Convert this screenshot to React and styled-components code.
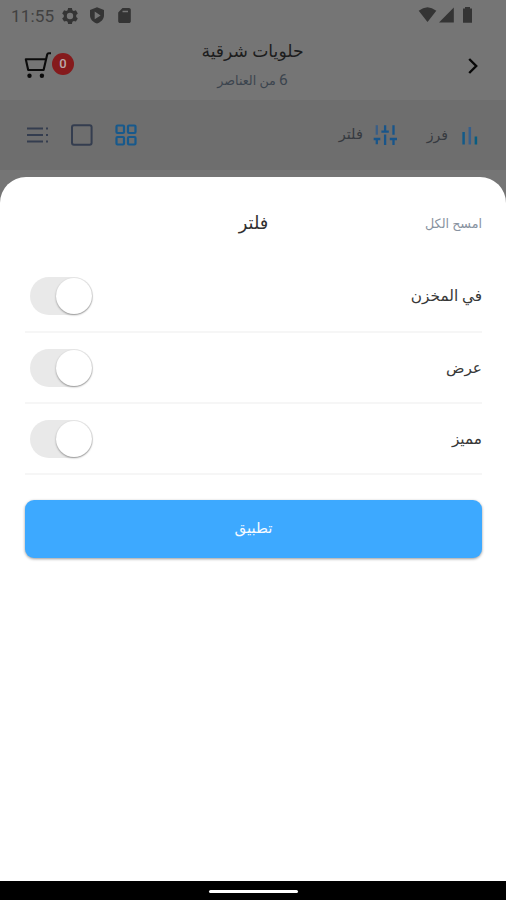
import React from "react";
import styled, { createGlobalStyle } from "styled-components";

const Global = createGlobalStyle`
  * { box-sizing: border-box; }
  body { margin: 0; background: #757575; }
  button { border: 0; padding: 0; background: none; font: inherit; color: inherit; }
`;

const Screen = styled.main`
  width: 506px;
  height: 900px;
  display: flex;
  flex-direction: column;
  overflow: hidden;
  background: #757575;
  font-family: Roboto, "DejaVu Sans", sans-serif;
`;

const StatusBar = styled.div`
  height: 32px;
  flex: none;
  display: flex;
  justify-content: space-between;
  padding: 0 32px 0 11px;
  color: #343434;
`;

const Clock = styled.span`
  width: 50px;
  font-size: 17.2px;
  line-height: 32px;
  letter-spacing: 0.1px;
  color: #414141;
`;

const StatusGroup = styled.div`
  display: flex;
  align-items: center;
`;

const Icon = styled.svg`
  display: block;
  flex: none;
  overflow: visible;
`;

const Header = styled.header`
  height: 68px;
  flex: none;
  display: grid;
  grid-template-columns: 100px 1fr 100px;
  padding: 0 25px 0 24px;
`;

const CartButton = styled.button`
  display: flex;
  align-items: flex-start;
  padding-top: 20px;
`;

const Badge = styled.span`
  width: 22px;
  height: 22px;
  margin: 1px 0 0 1px;
  border-radius: 50%;
  background: #851a1c;
  color: #b9a9a9;
  font: 500 13px/22px Roboto, sans-serif;
  text-align: center;
`;

const Titles = styled.div`
  display: flex;
  flex-direction: column;
  align-items: center;
  direction: rtl;
`;

const Label = styled.span`
  display: block;
  direction: rtl;
  white-space: nowrap;
  font-size: ${(p) => p.$size}px;
  line-height: ${(p) => p.$line}px;
  margin-top: ${(p) => p.$top || 0}px;
  color: ${(p) => p.$color};
`;

const Count = styled.span`
  font-size: 15.5px;
`;

const BackButton = styled.button`
  display: flex;
  justify-content: flex-end;
  padding: 26px 3px 0 0;
`;

const Toolbar = styled.nav`
  height: 70px;
  flex: none;
  display: flex;
  justify-content: space-between;
  align-items: center;
  padding: 0 27px 0 26px;
  background: #6e6e6e;
`;

const ToolGroup = styled.div`
  display: flex;
  align-items: center;
  gap: ${(p) => p.$gap}px;
`;

const Tool = styled.button`
  display: flex;
  align-items: center;
  gap: ${(p) => p.$gap || 0}px;
`;

const Sheet = styled.section`
  flex: 1;
  margin-top: 6.5px;
  padding: 0 24px 0 25px;
  border-radius: 26px 26px 0 0;
  background: #fff;
`;

const SheetHead = styled.div`
  height: 84.5px;
  display: grid;
  grid-template-columns: 1fr auto 1fr;
  padding-top: 31px;
  direction: rtl;
`;

const ClearButton = styled.button`
  display: flex;
  justify-content: flex-start;
  align-items: flex-start;
`;

const Option = styled.div`
  height: ${(p) => p.$height || 71.5}px;
  display: flex;
  justify-content: space-between;
  align-items: center;
  direction: rtl;
  padding: 1px 0 0 5px;
  border-bottom: 2px solid #f6f6f6;
`;

const Switch = styled.button`
  width: 63px;
  height: 38px;
  display: flex;
  direction: ltr;
  justify-content: flex-end;
  align-items: center;
  padding-right: 1px;
  border-radius: 19px;
  background: #e9e9e9;
`;

const Knob = styled.span`
  width: 36px;
  height: 36px;
  border-radius: 50%;
  background: #fff;
  box-shadow: 0 1px 2px rgba(0, 0, 0, 0.38);
`;

const ApplyButton = styled.button`
  width: 100%;
  height: 58px;
  margin-top: 25px;
  display: flex;
  justify-content: center;
  border-radius: 9px;
  background: #3da9ff;
  box-shadow: 0 1px 3px rgba(0, 0, 0, 0.4);
`;

const NavBar = styled.footer`
  height: 19px;
  flex: none;
  display: flex;
  justify-content: center;
  padding-top: 9px;
  background: #000;
`;

const HomeHandle = styled.span`
  width: 89px;
  height: 3px;
  border-radius: 2px;
  background: #fff;
`;

const options = [
  { label: "في المخزن", height: 71.5 },
  { label: "عرض", height: 71.5 },
  { label: "مميز", height: 71 },
];

function LeftStatusIcons() {
  return (
    <Icon width="72" height="32" viewBox="0 0 72 32" fill="currentColor">
      <path fillRule="evenodd" d="M7.1 8h3.8l.5 2.2 1.4.8 2.1-.7 1.9 3.3-1.6 1.5v1.8l1.6 1.5-1.9 3.2-2.1-.7-1.4.8-.5 2.2H7.1l-.5-2.2-1.4-.8-2.1.7-1.9-3.2 1.6-1.5v-1.8l-1.6-1.5 1.9-3.3 2.1.7 1.4-.8zM9 12.8a3.2 3.2 0 1 0 0 6.4 3.2 3.2 0 0 0 0-6.4z" />
      <path fillRule="evenodd" d="M36 7.3l7 2.8v5.2c0 4.1-3 6.8-7 8.3-4-1.5-7-4.2-7-8.3v-5.2zM33.7 11.5v7.8l5.9-3.9z" />
      <path fillRule="evenodd" d="M61.5 8H68c1 0 1.800.8 1.800 1.800v11.400c0 1-.8 1.800-1.800 1.800H59c-1 0-1.800-.8-1.800-1.800v-8.600zM61.500 10.800v1.400h5.500v-1.400z" />
    </Icon>
  );
}

function RightStatusIcons() {
  return (
    <Icon width="56" height="32" viewBox="0 0 56 32" fill="currentColor">
      <path d="M.7 10.800Q9.500 3.800 18.300 10.800L9.500 22z" />
      <path d="M21 22.500L35.800 7.500v15z" />
      <path d="M45 8.500h2V7h5v1.500h2v14.300h-9z" />
    </Icon>
  );
}

function CartIcon() {
  return (
    <Icon width="27" height="27" viewBox="0 0 27 27" fill="none" stroke="#0b0b0b" strokeWidth="2.100">
      <path d="M27 1.300h-2.300q-1.200 0-1.500 1.200L19.600 18H4.200L1.800 7.200h20.300" strokeLinejoin="round" />
      <circle cx="5.500" cy="23.800" r="2.200" fill="#0b0b0b" stroke="none" />
      <circle cx="17.900" cy="23.800" r="2.200" fill="#0b0b0b" stroke="none" />
    </Icon>
  );
}

function ListIcon() {
  return (
    <Icon width="23" height="22" viewBox="0 0 23 22" stroke="#343d4f" strokeWidth="2">
      <path d="M1 4.500h16M1 11h16M1 17.500h16M20 4.500h2M20 11h2M20 17.500h2" />
    </Icon>
  );
}

function SquareIcon() {
  return (
    <Icon width="22" height="22" viewBox="0 0 22 22" fill="none" stroke="#343d4f" strokeWidth="2">
      <rect x="1" y="1.200" width="19.600" height="19.600" rx="2" />
    </Icon>
  );
}

function GridIcon() {
  return (
    <Icon width="22" height="22" viewBox="0 0 22 22" fill="none" stroke="#17598c" strokeWidth="2.200">
      <rect x="1.500" y="1.500" width="7.500" height="7.500" rx="1" />
      <rect x="13" y="1.500" width="7.500" height="7.500" rx="1" />
      <rect x="1.500" y="13" width="7.500" height="7.500" rx="1" />
      <rect x="13" y="13" width="7.500" height="7.500" rx="1" />
    </Icon>
  );
}

function SlidersIcon() {
  return (
    <Icon width="24" height="22" viewBox="0 0 24 22" fill="none" stroke="#18558a" strokeWidth="2.300">
      <path d="M3.800 1.200v9.500" stroke="#3a5e86" />
      <path d="M.7 15h6.600M3.800 15v5.200M12.100 1.200v6M8.400 7.600h7.400M12.100 10.500V21M20.500 1.200v9.500M16.800 15h7.200M20.500 15v6" />
    </Icon>
  );
}

function BarsIcon() {
  return (
    <Icon width="17" height="20" viewBox="0 0 17 20" fill="none" strokeWidth="2.500">
      <path d="M1.600 7v12.500" stroke="#135a88" />
      <path d="M7.800 2v17.500" stroke="#355f8c" />
      <path d="M13.900 11.500v8" stroke="#075d82" />
    </Icon>
  );
}

export default function App() {
  return (
    <>
      <Global />
      <Screen>
        <StatusBar>
          <StatusGroup>
            <Clock>11:55</Clock>
            <LeftStatusIcons />
          </StatusGroup>
          <RightStatusIcons />
        </StatusBar>
        <Header>
          <CartButton aria-label="السلة">
            <CartIcon />
            <Badge>0</Badge>
          </CartButton>
          <Titles>
            <Label $size={17.2} $line={30} $top={4} $color="#1d1d1d">حلويات شرقية</Label>
            <Label $size={12.7} $line={26} $top={1} $color="#3b444e">
              <Count>6</Count> من العناصر
            </Label>
          </Titles>
          <BackButton aria-label="رجوع">
            <Icon width="10" height="16" viewBox="0 0 10 16" fill="none" stroke="#080808" strokeWidth="2.400">
              <path d="M1.200 1l7 7-7 7" />
            </Icon>
          </BackButton>
        </Header>
        <Toolbar>
          <ToolGroup $gap={22}>
            <Tool aria-label="قائمة"><ListIcon /></Tool>
            <Tool aria-label="بطاقة"><SquareIcon /></Tool>
            <Tool aria-label="شبكة"><GridIcon /></Tool>
          </ToolGroup>
          <ToolGroup $gap={30}>
            <Tool $gap={10}>
              <Label $size={14.5} $line={30} $color="#363a40">فلتر</Label>
              <SlidersIcon />
            </Tool>
            <Tool $gap={14}>
              <Label $size={14} $line={30} $color="#363a40">فرز</Label>
              <BarsIcon />
            </Tool>
          </ToolGroup>
        </Toolbar>
        <Sheet>
          <SheetHead>
            <ClearButton>
              <Label $size={12.7} $line={31} $color="#8792a0">امسح الكل</Label>
            </ClearButton>
            <Label $size={17.8} $line={30} $color="#303030">فلتر</Label>
          </SheetHead>
          {options.map((o) => (
            <Option key={o.label} $height={o.height}>
              <Label $size={15.3} $line={36} $color="#383838">{o.label}</Label>
              <Switch role="switch" aria-checked="false" aria-label={o.label}>
                <Knob />
              </Switch>
            </Option>
          ))}
          <ApplyButton>
            <Label $size={15} $line={57} $color="#f5faff">تطبيق</Label>
          </ApplyButton>
        </Sheet>
        <NavBar>
          <HomeHandle />
        </NavBar>
      </Screen>
    </>
  );
}
